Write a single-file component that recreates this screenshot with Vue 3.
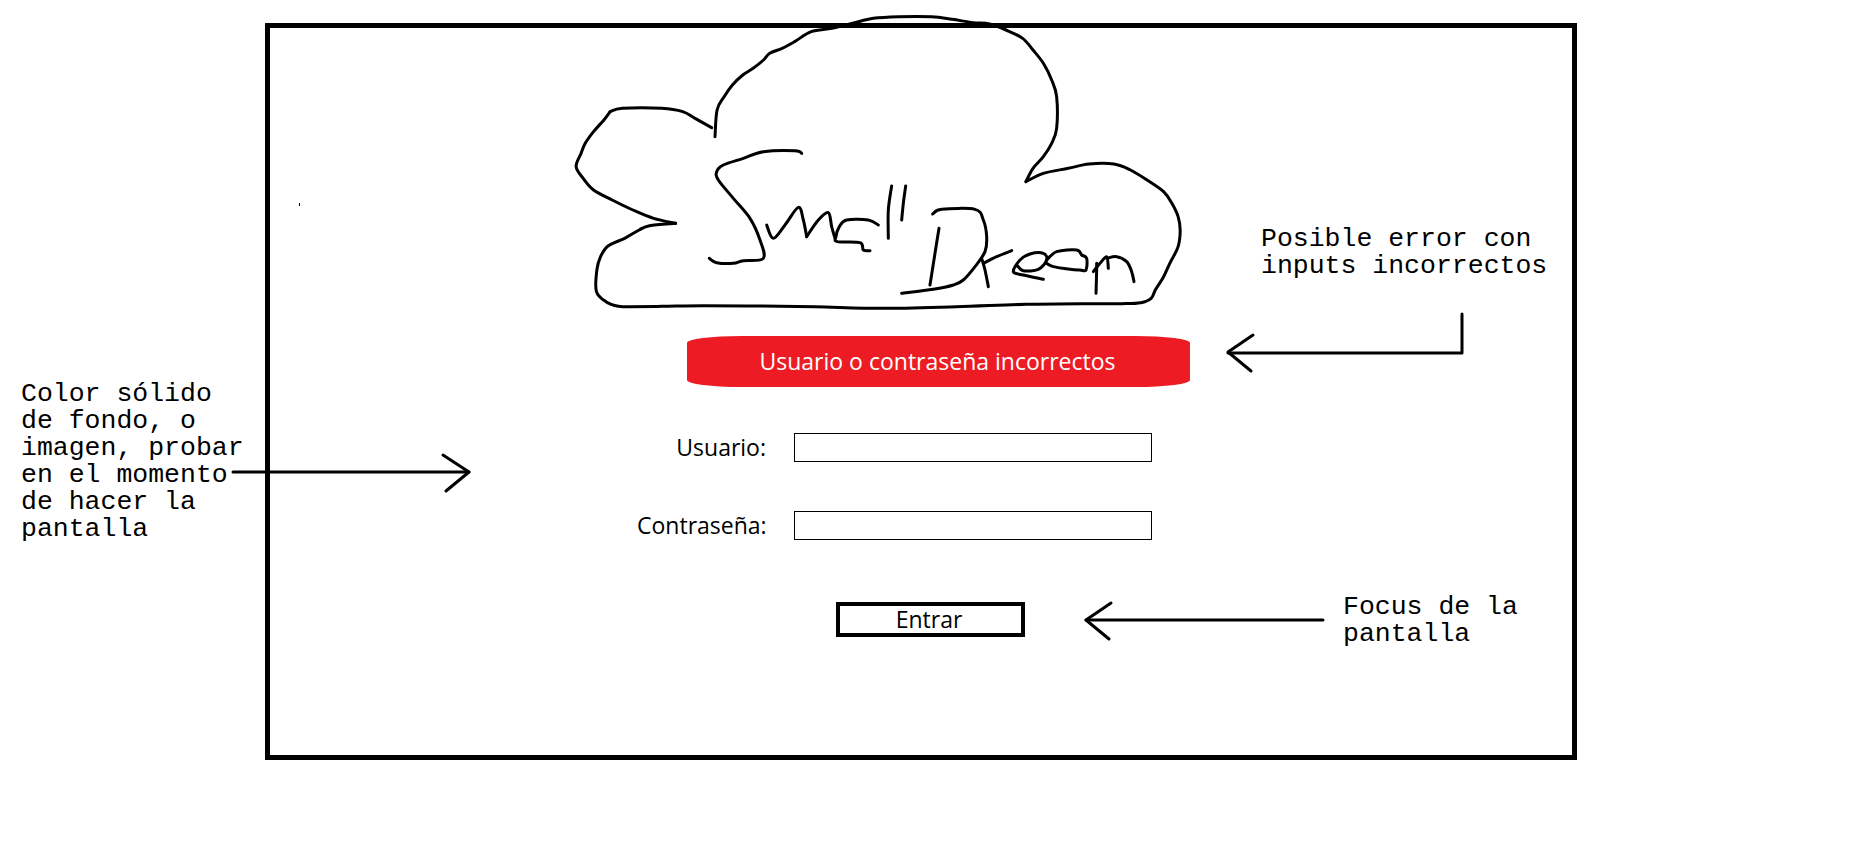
<script setup>
// Catmull-Rom smoothing so the traced strokes read as a hand-drawn line.
function smooth(str) {
  const p = str.split(' ').map((s) => s.split(',').map(Number))
  let d = `M${p[0][0]} ${p[0][1]}`
  for (let i = 0; i < p.length - 1; i++) {
    const a = p[i - 1] || p[i]
    const b = p[i]
    const c = p[i + 1]
    const e = p[i + 2] || c
    const c1x = b[0] + (c[0] - a[0]) / 6
    const c1y = b[1] + (c[1] - a[1]) / 6
    const c2x = c[0] - (e[0] - b[0]) / 6
    const c2y = c[1] - (e[1] - b[1]) / 6
    d += ` C${c1x.toFixed(1)} ${c1y.toFixed(1)} ${c2x.toFixed(1)} ${c2y.toFixed(1)} ${c[0]} ${c[1]}`
  }
  return d
}

const cloud = [
  "398,410 403,330 420,290 440,255 465,225 490,205 515,180 530,160 560,145 590,125 630,95 680,85 730,70 780,55 840,50 920,50 970,58 1020,68 1060,72 1100,90 1140,115 1165,150 1190,190 1210,240 1222,290 1222,385 1210,430 1190,470 1165,505 1148,545",
  "1148,545 1190,520 1250,505 1300,492 1360,492 1400,510 1440,540 1480,575 1500,610 1515,650 1520,690 1515,740 1495,790 1480,830 1460,870 1450,895 1425,908 1380,911 1300,911 1150,913 980,920 800,925 640,920 500,918 370,917 270,919 190,920 165,919 135,905 112,875 113,810 122,770 140,738 180,715 215,690 240,677 303,670",
  "303,670 250,655 200,630 150,600 105,570 80,535 63,500 75,460 85,430 105,395 130,360 145,335",
  "145,335 175,325 270,325 320,335 350,355 390,383"
].map(smooth)

// Traced from a true 3x crop whose origin is (700,130).
const signature = [
  "305,70 285,62 190,65 130,85 70,105 50,125 55,150 100,205 150,265 180,330 190,385 130,392 100,400 50,398 28,385",
  "717,295 705,370 690,465",
  "698,252 725,238 825,238 850,270 860,320 855,365 825,410 790,450 760,465 700,478 605,490"
].map(smooth)

// Traced from a true 3x crop whose origin is (760,170).
const small = [
  "20,165 40,205 75,165 115,112 130,150 140,200",
  "140,200 175,150 205,128 215,170 225,205",
  "355,165 325,150 260,150 238,170 228,200 232,215 300,218 310,240 330,242",
  "395,48 385,120 385,205",
  "437,48 430,100 425,150"
].map(smooth)

// Traced from a true 3x crop whose origin is (980,230).
const dream = [
  "5,85 15,120 25,170",
  "10,100 50,80 95,62",
  "190,148 130,135 100,125 120,90 150,72 190,70 200,90 175,118 130,122 110,105",
  "200,90 230,65 290,60 305,75 320,85 318,120 300,120 270,118 220,110 200,100",
  "348,190 350,120 350,100",
  "340,125 360,100 380,80 385,115",
  "380,85 410,80 440,95 455,125 462,155"
].map(smooth)

const arrows = [
  "233,472 469,472",
  "443,455 469,472 446,491",
  "1462,314 1462,353 1228,353",
  "1253,335 1228,352 1251,371",
  "1323,620 1086,620",
  "1111,603 1086,620 1109,639"
]
</script>

<template>
  <main class="page">
    <section class="frame">
      <p class="alert">Usuario o contraseña incorrectos</p>
      <form class="form" @submit.prevent>
        <label class="label" for="user">Usuario:</label>
        <input id="user" class="input" type="text" />
        <label class="label" for="pass">Contraseña:</label>
        <input id="pass" class="input" type="password" />
      </form>
      <button class="enter" type="button">Entrar</button>
    </section>

    <svg class="sketch" width="1869" height="845" viewBox="0 0 1869 845" fill="none" stroke="#000" stroke-linecap="round" stroke-linejoin="round">
      <g transform="translate(550 0) scale(0.41459 0.33333)">
        <path v-for="d in cloud" :key="d" :d="d" class="ink" />
      </g>
      <g transform="translate(700 130) scale(0.33333)">
        <path v-for="d in signature" :key="d" :d="d" class="ink" />
      </g>
      <g transform="translate(760 170) scale(0.33333)">
        <path v-for="d in small" :key="d" :d="d" class="ink" />
      </g>
      <g transform="translate(980 230) scale(0.33333)">
        <path v-for="d in dream" :key="d" :d="d" class="ink" />
      </g>
      <polyline v-for="a in arrows" :key="a" :points="a" stroke-width="3" />
      <rect x="299" y="203" width="1" height="3" fill="#000" stroke="none" />
    </svg>

    <p class="note note-bg">Color sólido<br />de fondo, o<br />imagen, probar<br />en el momento<br />de hacer la<br />pantalla</p>
    <p class="note note-err">Posible error con<br />inputs incorrectos</p>
    <p class="note note-focus">Focus de la<br />pantalla</p>
  </main>
</template>

<style>
html, body { margin: 0; background: #fff; }
</style>

<style scoped>
.page {
  position: relative;
  width: 1869px;
  height: 845px;
  overflow: hidden;
  background: #fff;
  padding: 23px 0 0 265px;
  box-sizing: border-box;
}
.frame {
  width: 1312px;
  height: 737px;
  box-sizing: border-box;
  border: 5px solid #000;
  padding: 308px 0 0 417px;
  display: flex;
  flex-direction: column;
  align-items: flex-start;
  font-family: "Open Sans", "Noto Sans", sans-serif;
  color: #000;
}
.alert {
  margin: 0 0 46px;
  width: 503px;
  height: 51px;
  padding-right: 2px;
  box-sizing: border-box;
  background: #ed1c24;
  border-radius: 54px / 7px;
  color: #fff;
  font-size: 23px;
  line-height: 51px;
  text-align: center;
}
.form {
  margin-left: -50px;
  display: grid;
  grid-template-columns: 129px 358px;
  column-gap: 28px;
  row-gap: 49px;
  align-items: center;
}
.label {
  text-align: right;
  font-size: 23px;
  line-height: 29px;
}
.input {
  box-sizing: border-box;
  width: 358px;
  height: 29px;
  margin: 0;
  padding: 0;
  border: 1px solid #000;
  border-radius: 0;
  background: #fff;
  outline: none;
}
.enter {
  box-sizing: border-box;
  margin: 62px 0 0 149px;
  width: 189px;
  height: 35px;
  padding: 0 3px 1px 0;
  border: 4px solid #000;
  border-radius: 0;
  background: #fff;
  color: #000;
  font-family: inherit;
  font-size: 23px;
  line-height: 27px;
}
.sketch {
  position: absolute;
  left: 0;
  top: 0;
  pointer-events: none;
}
.ink {
  vector-effect: non-scaling-stroke;
  stroke-width: 3px;
}
.note {
  position: absolute;
  margin: 0;
  font-family: "Liberation Mono", monospace;
  font-size: 26.5px;
  line-height: 27px;
  color: #000;
  white-space: nowrap;
}
.note-bg { left: 21px; top: 381px; }
.note-err { left: 1261px; top: 226px; }
.note-focus { left: 1343px; top: 594px; }
</style>
